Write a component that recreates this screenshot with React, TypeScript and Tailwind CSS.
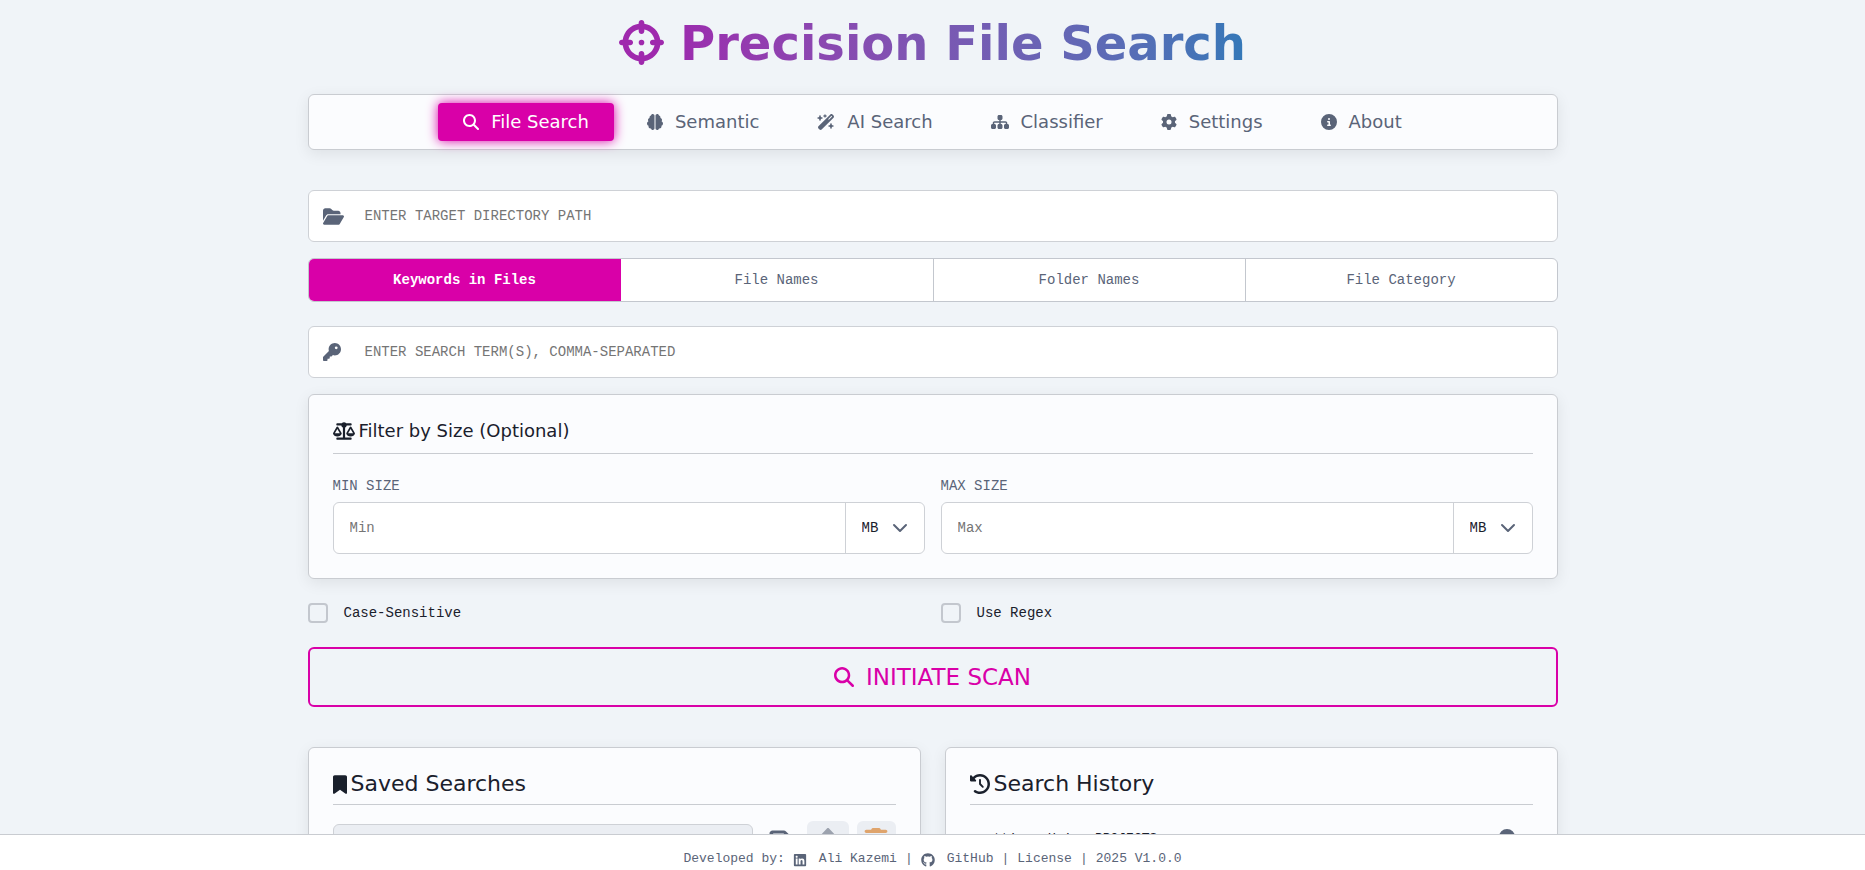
import React from "react";
import {
  FaBookmark, FaBrain, FaCircleInfo, FaCrosshairs, FaFolderOpen, FaGear, FaGithub, FaKey, FaLinkedin,
  FaMagnifyingGlass, FaScaleBalanced, FaSitemap, FaWandMagicSparkles, FaClockRotateLeft, FaFloppyDisk,
  FaTrash, FaUpLong, FaCircleXmark,
} from "react-icons/fa6";

const display = "font-['DejaVu_Sans',sans-serif]";
const panel = "rounded-md border border-[#c9ccd1] bg-[#fbfcfe] shadow-[0_4px_15px_rgba(0,0,0,0.08)]";
const field = "flex rounded-md border border-[#ced1d6] bg-white";

const tabs = [
  { label: "File Search", icon: FaMagnifyingGlass, size: 16 },
  { label: "Semantic", icon: FaBrain, size: 16 },
  { label: "AI Search", icon: FaWandMagicSparkles, size: 18 },
  { label: "Classifier", icon: FaSitemap, size: 18 },
  { label: "Settings", icon: FaGear, size: 16 },
  { label: "About", icon: FaCircleInfo, size: 16 },
];

const modes = ["Keywords in Files", "File Names", "Folder Names", "File Category"];

function TextField({ id, label, icon: Icon, size }: { id: string; label: string; icon: React.ElementType; size: number }) {
  return (
    <div className={`${field} h-[52px] items-center`}>
      <label htmlFor={id} aria-label={label} className="flex w-14 pl-[14px] text-[#5a6478]">
        <Icon size={size} />
      </label>
      <input id={id} type="text" placeholder={label} className="h-full flex-1 bg-transparent uppercase outline-none placeholder:text-[#757575]" />
    </div>
  );
}

function SizeField({ id, label, hint }: { id: string; label: string; hint: string }) {
  return (
    <div>
      <label htmlFor={id} className="mb-1 block leading-6 text-[#5a6478] uppercase">{label}</label>
      <div className={`${field} h-[52px]`}>
        <input id={id} type="text" placeholder={hint} className="min-w-0 flex-1 px-4 outline-none placeholder:text-[#757575]" />
        <div className="relative w-[79px] border-l border-[#ced1d6]">
          <select aria-label={`${label} unit`} defaultValue="MB" className="h-full w-full appearance-none bg-transparent pl-4">
            <option>KB</option>
            <option>MB</option>
            <option>GB</option>
          </select>
          <svg className="pointer-events-none absolute top-[17px] right-4 h-4 w-4" viewBox="0 0 16 16" fill="none" stroke="#5a6478" strokeWidth="2" strokeLinecap="round" strokeLinejoin="round">
            <path d="M2 5l6 6 6-6" />
          </svg>
        </div>
      </div>
    </div>
  );
}

function Check({ label }: { label: string }) {
  return (
    <label className="flex items-center gap-4">
      <input type="checkbox" className="h-5 w-5 appearance-none rounded-sm border-2 border-[#c3c7ce] checked:bg-[#d900a8]" />
      {label}
    </label>
  );
}

export default function App() {
  return (
    <div className="h-screen overflow-hidden bg-[#f0f4f8] font-['Liberation_Mono',monospace] text-sm text-[#1a202c]">
      <main className="mx-auto max-w-[1250px]">
        <h1 className="flex h-[94px] items-start justify-center gap-4 pt-4 font-['DejaVu_Sans',sans-serif] text-[48px] leading-[54px] font-bold">
          <FaCrosshairs size={45} className="mt-1 text-[#9f29ad]" />
          <span className="bg-linear-to-r from-[#9b2cae] to-[#3378b8] bg-clip-text text-transparent">Precision File Search</span>
        </h1>

        <nav className={`${panel} flex justify-center gap-2 py-2`}>
          {tabs.map(({ label, icon: Icon, size }, i) => (
            <button
              key={label}
              className={`${display} flex h-[38px] items-center gap-3 rounded-sm px-[25px] text-[18px] ${i === 0 ? "bg-[#d900a8] text-white shadow-[0_0_12px_#d900a8]" : "text-[#5a6478]"}`}
            >
              <Icon size={size} />
              {label}
            </button>
          ))}
        </nav>

        <div className="mt-10">
          <TextField id="directory" label="ENTER TARGET DIRECTORY PATH" icon={FaFolderOpen} size={21} />
        </div>

        <div className="mt-4 grid h-11 grid-cols-4 overflow-hidden rounded-md border border-[#c3c7ce] bg-white">
          {modes.map((mode, i) => (
            <button
              key={mode}
              className={i === 0 ? "bg-[#d900a8] font-bold text-white" : i === 1 ? "text-[#5a6478]" : "border-l border-[#c3c7ce] text-[#5a6478]"}
            >
              {mode}
            </button>
          ))}
        </div>

        <div className="mt-6">
          <TextField id="terms" label="ENTER SEARCH TERM(S), COMMA-SEPARATED" icon={FaKey} size={18} />
        </div>

        <section className={`${panel} mt-4 p-6`}>
          <h2 className={`${display} flex items-center gap-1 border-b border-[#c9ccd1] pb-2.5 text-[18px] leading-6`}>
            <FaScaleBalanced size={22} />
            Filter by Size (Optional)
          </h2>
          <div className="mt-5 grid grid-cols-2 gap-4">
            <SizeField id="min" label="Min Size" hint="Min" />
            <SizeField id="max" label="Max Size" hint="Max" />
          </div>
        </section>

        <div className="mt-6 grid grid-cols-2 gap-4">
          <Check label="Case-Sensitive" />
          <Check label="Use Regex" />
        </div>

        <button className={`${display} mt-6 flex h-[60px] w-full items-center justify-center gap-3 rounded-md border-2 border-[#d900a8] text-[23px] text-[#d900a8]`}>
          <FaMagnifyingGlass size={20} />
          INITIATE SCAN
        </button>

        <div className="mt-10 grid grid-cols-2 gap-6">
          <section className={`${panel} h-60 p-6`}>
            <h2 className={`${display} flex items-center gap-1 border-b border-[#c9ccd1] pb-2 text-[22px] leading-6`}>
              <FaBookmark size={19} viewBox="0 0 384 512" className="w-[14px]" />
              Saved Searches
            </h2>
            <div className="mt-4 flex gap-2">
              <select aria-label="Saved searches" className="mt-[3px] h-11 flex-1 appearance-none rounded-md border border-[#ced1d6] bg-[#ebeef3]" />
              <button aria-label="Save search" className="flex h-10 w-[38px] justify-center pt-2 text-[#5a6478]">
                <FaFloppyDisk size={24} />
              </button>
              <button aria-label="Load search" className="flex h-10 w-[42px] justify-center rounded-md bg-[#ebeef3] pt-[7px] text-[#9ca2ae]">
                <FaUpLong size={24} />
              </button>
              <button aria-label="Delete search" className="flex h-10 w-[39px] justify-center rounded-md bg-[#ebeef3] pt-[7px] text-[#dfa46c]">
                <FaTrash size={26} />
              </button>
            </div>
          </section>

          <section className={`${panel} h-60 p-6`}>
            <h2 className={`${display} flex items-center gap-1 border-b border-[#c9ccd1] pb-2 text-[22px] leading-6`}>
              <FaClockRotateLeft size={20} />
              Search History
            </h2>
            <div className="mt-4 flex items-start justify-between pt-1.5 pr-[18px] pl-6">
              <span className="text-[13px] leading-6">ttings Using PROJECTS</span>
              <FaCircleXmark size={16} className="mt-0.5 text-[#5a6478]" />
            </div>
          </section>
        </div>
      </main>

      <footer className="fixed inset-x-0 bottom-0 flex h-9 items-center justify-center gap-2 border-t border-[#c9ccd1] bg-white pt-[14px] text-[13px] text-[#5a6478]">
        Developed by:
        <a href="#linkedin" className="flex items-center gap-3"><FaLinkedin size={14} />Ali Kazemi</a>|
        <a href="#github" className="flex items-center gap-3"><FaGithub size={14} />GitHub</a>|
        <a href="#license">License</a>|
        <span>2025 V1.0.0</span>
      </footer>
    </div>
  );
}
